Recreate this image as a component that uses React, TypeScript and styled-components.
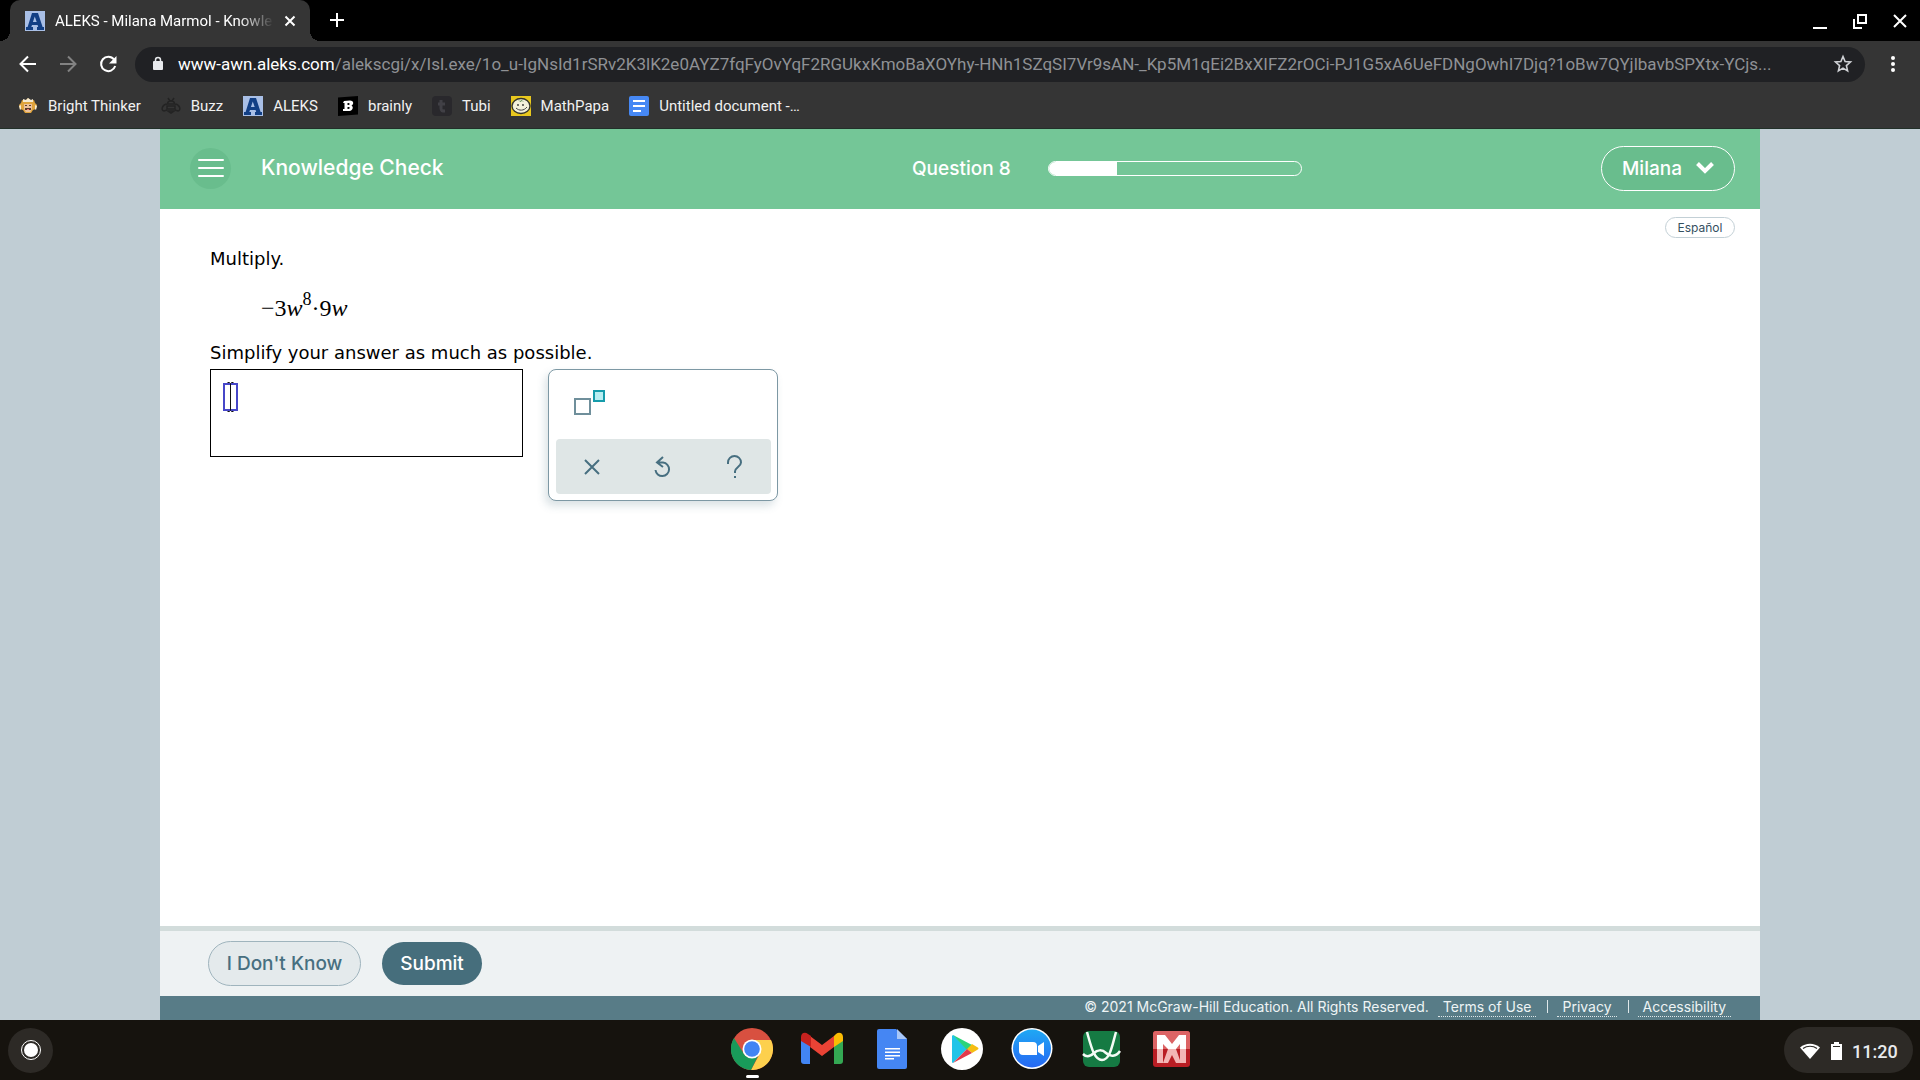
import React from "react";
import styled, { createGlobalStyle } from "styled-components";

const ui = `Roboto, "Liberation Sans", sans-serif`;
const brand = `Inter, "Open Sans", sans-serif`;
const body = `"DejaVu Sans", Verdana, sans-serif`;
const math = `"Liberation Serif", "Times New Roman", serif`;

const Global = createGlobalStyle`
  *, *::before, *::after { box-sizing: border-box; }
  body { margin: 0; background: #c0cdd4; }
  button, input, textarea { font: inherit; color: inherit; margin: 0; }
  button { cursor: pointer; border: 0; padding: 0; background: none; }
  svg { display: block; flex: none; }
`;

const Screen = styled.div`
  display: flex;
  flex-direction: column;
  min-height: 100vh;
  font-family: ${ui};
`;

/* Browser chrome */
const TabStrip = styled.header`
  display: flex;
  align-items: stretch;
  height: 41px;
  padding-left: 10px;
  background: #000;
  color: #fff;
`;
const Tab = styled.div`
  position: relative;
  display: flex;
  align-items: center;
  gap: 10px;
  width: 300px;
  padding: 0 14px 0 15px;
  border-radius: 10px 10px 0 0;
  background: #353535;
  font-size: 15px;
  &::before,
  &::after {
    content: "";
    position: absolute;
    bottom: 0;
    width: 10px;
    height: 10px;
  }
  &::before {
    left: -10px;
    background: radial-gradient(circle at 0 0, transparent 10px, #353535 10px);
  }
  &::after {
    right: -10px;
    background: radial-gradient(circle at 100% 0, transparent 10px, #353535 10px);
  }
`;
const TabTitle = styled.span`
  flex: 1;
  overflow: hidden;
  white-space: nowrap;
  line-height: 20px;
  mask-image: linear-gradient(to right, #000 84%, transparent);
`;
const IconButton = styled.button<{ $size?: number }>`
  display: flex;
  align-items: center;
  justify-content: center;
  flex: none;
  width: ${(p) => p.$size ?? 40}px;
  height: ${(p) => p.$size ?? 40}px;
`;
const TabClose = styled(IconButton)`
  width: 12px;
  height: 20px;
`;
const NewTab = styled(IconButton)`
  margin-left: 7px;
`;
const WindowControls = styled.div`
  display: flex;
  align-items: flex-end;
  margin-left: auto;
`;

const Toolbar = styled.nav`
  display: flex;
  align-items: center;
  height: 46px;
  padding: 0 7px 0 8px;
  background: #353535;
  color: #fff;
`;
const AddressBar = styled.label`
  display: flex;
  align-items: center;
  flex: 1;
  min-width: 0;
  height: 35px;
  margin: 0 8px 0 7px;
  padding: 0 2px 0 16px;
  border-radius: 18px;
  background: #202124;
  font-size: 17px;
  line-height: 24px;
`;
const Host = styled.span`
  margin-left: 13px;
`;
const PathInput = styled.input`
  flex: 1;
  min-width: 0;
  height: 24px;
  padding: 0;
  border: 0;
  outline: 0;
  background: none;
  color: #8f9195;
  text-overflow: ellipsis;
`;

const Bookmarks = styled.nav`
  display: flex;
  align-items: center;
  gap: 20px;
  height: 42px;
  padding: 0 18px 4px;
  border-bottom: 1px solid #223029;
  background: #353535;
`;
const Bookmark = styled.a`
  display: flex;
  align-items: center;
  gap: 10px;
  color: #f1f1f1;
  font-size: 15px;
  line-height: 20px;
  text-decoration: none;
  white-space: nowrap;
`;

/* Course page */
const Page = styled.div`
  display: flex;
  flex: 1;
  flex-direction: column;
  width: 100%;
  max-width: 1600px;
  margin: 0 auto;
  background: #fff;
`;
const CourseBar = styled.header`
  display: grid;
  grid-template-columns: 47% 1fr auto;
  align-items: center;
  height: 80px;
  padding-bottom: 2px;
  background: #74c697;
  color: #fff;
  font-family: ${brand};
`;
const CourseTitle = styled.div`
  display: flex;
  align-items: center;
  gap: 30px;
  padding-left: 30px;
`;
const MenuButton = styled(IconButton)`
  width: 41px;
  height: 41px;
  border-radius: 50%;
  background: #69bd8d;
`;
const Heading = styled.h1`
  margin: 0;
  font-size: 21px;
  font-weight: 500;
  line-height: 28px;
`;
const Progress = styled.div`
  display: flex;
  align-items: center;
  gap: 37px;
  font-size: 19px;
  font-weight: 500;
`;
const Track = styled.div`
  width: 254px;
  height: 15px;
  overflow: hidden;
  border: 1px solid #fff;
  border-radius: 8px;
`;
const Fill = styled.div`
  height: 100%;
  background: #fff;
`;
const UserButton = styled.button`
  display: flex;
  align-items: center;
  justify-content: space-between;
  width: 134px;
  height: 45px;
  margin-right: 25px;
  padding: 0 20px;
  border: 1px solid #fff;
  border-radius: 23px;
  background: #69bd8d;
  font-size: 19px;
  font-weight: 500;
`;
const Language = styled.div`
  display: flex;
  justify-content: flex-end;
  padding: 8px 25px 0;
`;
const LanguageButton = styled.button`
  width: 70px;
  height: 21px;
  border: 1px solid #c3d0d6;
  border-radius: 11px;
  color: #35505f;
  font-family: ${brand};
  font-size: 12px;
  line-height: 19px;
`;
const Question = styled.main`
  flex: 1;
  padding: 9px 50px;
  color: #000;
  font-family: ${body};
  font-size: 18px;
  line-height: 24px;
`;
const Prompt = styled.p`
  margin: 0;
`;
const Expression = styled.div`
  margin: 23px 0 19px 51px;
  font-family: ${math};
  font-size: 24px;
  line-height: 28px;
  sup {
    font-size: 18px;
    line-height: 0;
    vertical-align: 11px;
  }
`;
const Workspace = styled.div`
  display: flex;
  align-items: flex-start;
  gap: 25px;
  margin-top: 4px;
`;
const AnswerBox = styled.label`
  position: relative;
  display: block;
`;
const AnswerInput = styled.textarea`
  display: block;
  width: 313px;
  height: 88px;
  padding: 12px;
  border: 1px solid #000;
  border-radius: 0;
  outline: 0;
  resize: none;
  background: #fff;
`;
const Caret = styled.svg`
  position: absolute;
  left: 13px;
  top: 12px;
`;
const Palette = styled.div`
  display: flex;
  flex-direction: column;
  justify-content: space-between;
  width: 230px;
  height: 132px;
  padding: 13px 6px 6px 7px;
  border: 1px solid #7d98a4;
  border-radius: 8px;
  background: #fff;
  box-shadow: -3px 5px 8px rgba(70, 110, 125, 0.2);
`;
const ExponentButton = styled(IconButton)`
  margin-left: 14px;
`;
const PaletteActions = styled.div`
  display: grid;
  grid-template-columns: repeat(3, 1fr);
  height: 55px;
  border-radius: 4px;
  background: #dfe6e6;
  color: #476f80;
`;
const PaletteButton = styled(IconButton)`
  width: 100%;
  height: 100%;
`;

const ActionBar = styled.div`
  display: flex;
  align-items: center;
  gap: 21px;
  height: 70px;
  padding: 0 48px;
  border-top: 5px solid #d2dcdb;
  background: #eef2f3;
`;
const Pill = styled.button<{ $primary?: boolean }>`
  height: ${(p) => (p.$primary ? 43 : 45)}px;
  width: ${(p) => (p.$primary ? 100 : 153)}px;
  border: ${(p) => (p.$primary ? "0" : "1px solid #9fb4bd")};
  border-radius: 23px;
  background: ${(p) => (p.$primary ? "#466e7c" : "#e4eaec")};
  color: ${(p) => (p.$primary ? "#fff" : "#476f80")};
  font-family: ${brand};
  font-size: 19px;
  font-weight: 500;
`;
const Legal = styled.footer`
  display: flex;
  align-items: center;
  justify-content: flex-end;
  height: 24px;
  padding: 0 29px 2px 20px;
  background: #587c87;
  color: #eef4f5;
  font-family: ${brand};
  font-size: 14px;
  line-height: 18px;
  white-space: nowrap;
`;
const LegalLink = styled.a`
  margin: 0 0 0 9px;
  padding: 0 5px;
  border-bottom: 1px dotted #dfe8ea;
  color: inherit;
  text-decoration: none;
`;
const Divider = styled.span`
  width: 1px;
  height: 13px;
  margin: 0 0 2px 11px;
  background: #dfe8ea;
`;

/* Shelf */
const Shelf = styled.footer`
  display: grid;
  grid-template-columns: 1fr auto 1fr;
  align-items: center;
  height: 60px;
  padding: 0 7px 0 8px;
  background: #16130e;
  color: #e8eaed;
`;
const Launcher = styled(IconButton)`
  width: 45px;
  height: 45px;
  border-radius: 50%;
  background: #2d2a26;
`;
const Apps = styled.div`
  display: flex;
  gap: 28px;
  height: 60px;
  padding-left: 3px;
`;
const AppButton = styled.button<{ $active?: boolean }>`
  display: flex;
  flex-direction: column;
  align-items: center;
  gap: 5px;
  width: 42px;
  padding-top: 8px;
  &::after {
    content: "";
    width: 13px;
    height: 3px;
    border-radius: 2px;
    background: ${(p) => (p.$active ? "#fff" : "transparent")};
  }
`;
const Tray = styled.button`
  display: flex;
  align-items: center;
  justify-self: end;
  gap: 10px;
  width: 129px;
  height: 46px;
  padding: 2px 15px 0;
  border-radius: 23px;
  background: #2d2a26;
  font-size: 18px;
  font-weight: 500;
`;

const Line = ({ size = 20, width = 2, children, box = 20 }: { size?: number; width?: number; box?: number; children: React.ReactNode }) => (
  <svg width={size} height={size} viewBox={`0 0 ${box} ${box}`} fill="none" stroke="currentColor" strokeWidth={width}>
    {children}
  </svg>
);

const AleksIcon = () => (
  <svg width="20" height="20" viewBox="0 0 20 20">
    <path fill="#a9bfe6" d="M0 0h20v20H0z" />
    <path fill="#123f85" fillRule="evenodd" d="M7 2h6l4.600 14H19v3h-7v-3h1.200l-.6-2H7l-.7 2H8v3H1v-3h1.600zM9.800 5.500 7.900 11h3.800z" />
  </svg>
);
const ThinkerIcon = () => (
  <svg width="20" height="20" viewBox="0 0 20 20">
    <path fill="#e0a43c" d="M1 9l2-2 1-3 3 1 3-3 3 3 3-1 1 3 2 2-1 4-3 1-2 3H7l-2-3-3-1z" />
    <path fill="#f5ead1" d="M5 3l3 1 2-2 3 2 2-1 0 3H5zM1 10l2-1v4l-1 1zM19 10l-2-1v4l1 1z" />
    <path fill="#ecc29c" d="M6 8h8v5l-2 3H8l-2-3z" />
    <path fill="#5c3b28" d="M7 9h2v1H7zM11 9h2v1h-2zM7 12h6v2H7z" />
    <path fill="#e77" d="M9 13h2v1H9z" />
  </svg>
);
const BuzzIcon = () => (
  <svg width="20" height="20" viewBox="0 0 20 20" fill="none" stroke="#232323" strokeWidth="1.500">
    <path d="M7 2l2 3M13 2l-2 3M6.500 8C6.500 4 13.500 4 13.500 8zM6 8C2 8-1 14 3 15l3-1M14 8c4 0 7 6 3 7l-3-1M6 10h8v3H6zM7 15h6l-3 2z" />
  </svg>
);
const BrainlyIcon = () => (
  <svg width="20" height="20" viewBox="0 0 20 20">
    <path fill="#000" d="M0 1.500 20 0v18.500L0 20z" />
    <path fill="#fff" fillRule="evenodd" d="M6 5l6-.5c4 0 4 4 1.500 5 2.500 1.500 1 5-2 5.500L5 15v-2h1.500V7H5zM9.500 7v2c3 0 3-2 0-2zm0 4v2c3 0 3-2.500 0-2z" />
  </svg>
);
const TubiIcon = () => (
  <svg width="20" height="20" viewBox="0 0 20 20">
    <rect width="20" height="20" rx="4" fill="#29282c" />
    <path d="M9 4v8c0 3 1 3 4 3M6 8h7" fill="none" stroke="#414046" strokeWidth="3" />
  </svg>
);
const PapaIcon = () => (
  <svg width="20" height="20" viewBox="0 0 20 20">
    <path fill="#e9c81e" d="M0 0h20v20H0z" />
    <ellipse cx="10" cy="10" rx="9" ry="7.500" fill="#f4f1dc" stroke="#35352b" strokeWidth="1.400" />
    <path d="M5 12c3 3 8 3 11-1" fill="none" stroke="#444" />
    <path d="M8 4.500l1 1 2-1 1 1" fill="none" stroke="#5a8a50" />
    <circle cx="7" cy="9" r="0.900" fill="#333" />
    <circle cx="12" cy="9" r="0.900" fill="#333" />
  </svg>
);
const DocMarkIcon = () => (
  <svg width="20" height="20" viewBox="0 0 20 20">
    <rect width="20" height="20" rx="2" fill="#4688f4" />
    <path fill="#fff" d="M4 4h12v2H4zM4 9h12v2H4zM4 14h8v2H4z" />
  </svg>
);

const ChromeIcon = () => (
  <svg width="42" height="42" viewBox="0 0 42 42">
    <circle cx="21" cy="21" r="21" fill="#d85040" />
    <path d="M21 12h19A21 21 0 0 1 20 42l9-16.500z" fill="#fdd04d" />
    <path d="M3 10l10 16c3 5 10 5 14 2l-7 14A21 21 0 0 1 3 10z" fill="#199b5a" />
    <circle cx="21" cy="21" r="9.500" fill="#fff" />
    <circle cx="21" cy="21" r="7.800" fill="#4284f4" />
  </svg>
);
const GmailIcon = () => (
  <svg width="42" height="42" viewBox="0 0 42 42">
    <path fill="#4285f4" d="M0 12l9 5v19H3a3 3 0 0 1-3-3z" />
    <path fill="#34a853" d="M42 12l-9 5v19h6a3 3 0 0 0 3-3z" />
    <path fill="#ea4335" d="M9 8l12 9 12-9v11L21 28 9 19z" />
    <path fill="#c5221f" d="M0 12V9c0-4 4-5.500 7-3l3 2v11L0 13z" />
    <path fill="#fbbc04" d="M42 12V9c0-4-4-5.500-7-3l-2 2v11l9-6z" />
  </svg>
);
const DocsIcon = () => (
  <svg width="42" height="42" viewBox="0 0 42 42">
    <path fill="#4586f3" d="M8 1h17l11 10v28a2 2 0 0 1-2 2H8a2 2 0 0 1-2-2V3a2 2 0 0 1 2-2z" />
    <path fill="#a8c7f8" d="M26 1l10 10H26z" />
    <path fill="#fff" d="M14 20h15v1.500H14zM14 23.500h15V25H14zM14 27h15v1.500H14zM14 30h9v1.500h-9z" />
  </svg>
);
const PlayIcon = () => (
  <svg width="42" height="42" viewBox="0 0 42 42">
    <circle cx="21" cy="21" r="21" fill="#fff" />
    <path fill="#20c4e8" d="M11 8c0-1 1-1 2-.5L26 21 12 35c-1 0-1-1-1-2z" />
    <path fill="#2bd47a" d="M12 7l19 10-5 5z" />
    <path fill="#f5bd12" d="M31 16l5 3c2 1 2 2 0 3l-5 3-5-4z" />
    <path fill="#e3394b" d="M26 21l5 4-19 10z" />
  </svg>
);
const ZoomIcon = () => (
  <svg width="42" height="42" viewBox="0 0 42 42">
    <defs>
      <linearGradient id="zoomFace" x1="0" y1="0" x2="0" y2="1">
        <stop offset="0" stopColor="#1fa8f4" />
        <stop offset="1" stopColor="#2668f3" />
      </linearGradient>
    </defs>
    <circle cx="21" cy="20.500" r="20.500" fill="#fff" />
    <circle cx="21" cy="20.500" r="19" fill="url(#zoomFace)" />
    <path fill="#fff" d="M8 14h14a4 4 0 0 1 4 4v9H12a4 4 0 0 1-4-4zM27 18l6-4v14l-6-4z" />
  </svg>
);
const DesmosIcon = () => (
  <svg width="42" height="42" viewBox="0 0 42 42">
    <rect x="2" y="3" width="37" height="36" rx="6" fill="#157a43" />
    <g fill="none" stroke="#f4fbf5" strokeWidth="2.500">
      <path d="M6 4c4 14 7 28 15 28S31 18 35 4" />
      <path d="M2 26c4 4 8 2 11-1s8-4 12 0 10 4 14-2" />
    </g>
  </svg>
);
const MathIcon = () => (
  <svg width="42" height="42" viewBox="0 0 42 42">
    <rect x="2" y="3" width="37" height="36" rx="3" fill="#b91e24" />
    <path fill="#dc6465" d="M5 3h31a3 3 0 0 1 3 3v15H2V6a3 3 0 0 1 3-3z" />
    <path fill="#fff" d="M6 7h8l7 9 7-9h7v14h-6v-5l-4 5h-8l-5-5v5H6z" />
    <path fill="#f3b6b5" d="M6 21h6v14H6zM29 21h6v14h-6zM17 21h8l5 14h-5l-4-8-4 8h-5z" />
  </svg>
);

const bookmarks = [
  { name: "Bright Thinker", Icon: ThinkerIcon },
  { name: "Buzz", Icon: BuzzIcon },
  { name: "ALEKS", Icon: AleksIcon },
  { name: "brainly", Icon: BrainlyIcon },
  { name: "Tubi", Icon: TubiIcon },
  { name: "MathPapa", Icon: PapaIcon },
  { name: "Untitled document -…", Icon: DocMarkIcon },
];
const apps = [
  { name: "Chrome", Icon: ChromeIcon, active: true },
  { name: "Gmail", Icon: GmailIcon },
  { name: "Docs", Icon: DocsIcon },
  { name: "Play Store", Icon: PlayIcon },
  { name: "Zoom", Icon: ZoomIcon },
  { name: "Desmos", Icon: DesmosIcon },
  { name: "Mathway", Icon: MathIcon },
];
const path =
  "/alekscgi/x/Isl.exe/1o_u-IgNsId1rSRv2K3lK2e0AYZ7fqFyOvYqF2RGUkxKmoBaXOYhy-HNh1SZqSI7Vr9sAN-_Kp5M1qEi2BxXIFZ2rOCi-PJ1G5xA6UeFDNgOwhI7Djq?1oBw7QYjlbavbSPXtx-YCjs...";

export default function App() {
  const progress = 27;
  return (
    <Screen>
      <Global />
      <TabStrip>
        <Tab>
          <AleksIcon />
          <TabTitle>ALEKS - Milana Marmol - Knowle</TabTitle>
          <TabClose aria-label="Close tab">
            <Line size={12} box={12}><path d="M1.500 1.500l9 9M10.500 1.500l-9 9" /></Line>
          </TabClose>
        </Tab>
        <NewTab aria-label="New tab">
          <Line size={16} box={16}><path d="M8 1v14M1 8h14" /></Line>
        </NewTab>
        <WindowControls>
          <IconButton aria-label="Minimize"><Line><path d="M3 17h14" /></Line></IconButton>
          <IconButton aria-label="Restore"><Line><path d="M8 4h8v8H8zM4 8v9h8" /></Line></IconButton>
          <IconButton aria-label="Close window"><Line><path d="M4 4l12 12M16 4L4 16" /></Line></IconButton>
        </WindowControls>
      </TabStrip>

      <Toolbar aria-label="Navigation">
        <IconButton aria-label="Back"><Line><path d="M18 10H3M10 2.500L2.500 10l7.500 7.500" /></Line></IconButton>
        <IconButton aria-label="Forward" disabled>
          <svg width="20" height="20" fill="none" stroke="#828282" strokeWidth="2"><path d="M2 10h15M10 2.500l7.500 7.500-7.500 7.500" /></svg>
        </IconButton>
        <IconButton aria-label="Reload">
          <svg width="20" height="20" fill="none" stroke="currentColor" strokeWidth="2">
            <path d="M16 5.500A7.200 7.200 0 1 0 17.200 12" />
            <path d="M18.500 2v7.500H11z" fill="currentColor" stroke="none" />
          </svg>
        </IconButton>
        <AddressBar>
          <svg width="14" height="18" viewBox="0 0 14 18">
            <rect x="2" y="6" width="10" height="9" rx="1" fill="#e8eaed" />
            <path d="M4.500 7V5a2.500 2.500 0 0 1 5 0v2" fill="none" stroke="#e8eaed" strokeWidth="1.500" />
          </svg>
          <Host>www-awn.aleks.com</Host>
          <PathInput aria-label="Address" defaultValue={path} />
          <IconButton aria-label="Bookmark this page">
            <svg width="20" height="20" fill="none" stroke="#d0d2d6" strokeWidth="1.600">
              <path d="M10 2.500l2.100 5 5.400.5-4.100 3.600 1.200 5.300L10 14.100l-4.600 2.800 1.200-5.300L2.500 8l5.400-.5z" />
            </svg>
          </IconButton>
        </AddressBar>
        <IconButton aria-label="Menu">
          <svg width="20" height="20" fill="currentColor">
            <circle cx="10" cy="4" r="2" /><circle cx="10" cy="10" r="2" /><circle cx="10" cy="16" r="2" />
          </svg>
        </IconButton>
      </Toolbar>

      <Bookmarks aria-label="Bookmarks">
        {bookmarks.map(({ name, Icon }) => (
          <Bookmark key={name} href="#"><Icon />{name}</Bookmark>
        ))}
      </Bookmarks>

      <Page>
        <CourseBar>
          <CourseTitle>
            <MenuButton aria-label="Open menu">
              <svg width="26" height="20" stroke="#fff" strokeWidth="2" strokeLinecap="round"><path d="M1 2h24M1 10h24M1 18h24" /></svg>
            </MenuButton>
            <Heading>Knowledge Check</Heading>
          </CourseTitle>
          <Progress>
            <span>Question 8</span>
            <Track role="progressbar" aria-label="Progress" aria-valuenow={progress}>
              <Fill style={{ width: `${progress}%` }} />
            </Track>
          </Progress>
          <UserButton>
            Milana
            <svg width="18" height="14" fill="none" stroke="#fff" strokeWidth="4"><path d="M1.500 2.500L9 10l7.500-7.500" /></svg>
          </UserButton>
        </CourseBar>
        <Language><LanguageButton>Español</LanguageButton></Language>

        <Question>
          <Prompt>Multiply.</Prompt>
          <Expression>−3<i>w</i><sup>8</sup>·9<i>w</i></Expression>
          <Prompt>Simplify your answer as much as possible.</Prompt>
          <Workspace>
            <AnswerBox>
              <AnswerInput aria-label="Your answer" />
              <Caret width="16" height="33" viewBox="0 0 16 33" fill="none">
                <path d="M1 3h13v26H1z" stroke="#4646c8" strokeWidth="2" />
                <path d="M7.500 3v26M4.500 1.500h2l1 1 1-1h2M4.500 30.500h2l1-1 1 1h2" stroke="#111" />
              </Caret>
            </AnswerBox>
            <Palette>
              <ExponentButton aria-label="Exponent">
                <svg width="40" height="40" viewBox="0 0 40 40">
                  <path d="M5 16h15v15H5z" fill="#fff" stroke="#6f8f9b" strokeWidth="2" />
                  <path d="M24 8h10v10H24z" fill="#b9eef2" stroke="#169cab" strokeWidth="2" />
                </svg>
              </ExponentButton>
              <PaletteActions>
                <PaletteButton aria-label="Clear"><Line size={16} box={16}><path d="M1 1l14 14M15 1L1 15" /></Line></PaletteButton>
                <PaletteButton aria-label="Undo">
                  <svg width="18" height="22" fill="none" stroke="currentColor" strokeWidth="2">
                    <path d="M9 1L3 6.500l6 4.500M3 6.500h6a6.800 6.800 0 1 1-7.500 7.500" />
                  </svg>
                </PaletteButton>
                <PaletteButton aria-label="Help">
                  <svg width="18" height="24" fill="none" stroke="currentColor" strokeWidth="2">
                    <path d="M2 9V7.500a6.500 6.500 0 0 1 13 0c0 4-6 5-6 9V18M9 21v2" />
                  </svg>
                </PaletteButton>
              </PaletteActions>
            </Palette>
          </Workspace>
        </Question>

        <ActionBar>
          <Pill>I Don't Know</Pill>
          <Pill $primary>Submit</Pill>
        </ActionBar>
        <Legal>
          <span>© 2021 McGraw-Hill Education. All Rights Reserved.</span>
          <LegalLink href="#">Terms of Use</LegalLink>
          <Divider />
          <LegalLink href="#">Privacy</LegalLink>
          <Divider />
          <LegalLink href="#">Accessibility</LegalLink>
        </Legal>
      </Page>

      <Shelf>
        <Launcher aria-label="Launcher">
          <svg width="22" height="22"><circle cx="11" cy="11" r="7" fill="#fff" /><circle cx="11" cy="11" r="9.500" fill="none" stroke="#fff" /></svg>
        </Launcher>
        <Apps>
          {apps.map(({ name, Icon, active }) => (
            <AppButton key={name} aria-label={name} $active={active}><Icon /></AppButton>
          ))}
        </Apps>
        <Tray>
          <svg width="22" height="20" viewBox="0 0 22 20">
            <path fill="#fff" d="M1 6.500C7 1.500 15 1.500 21 6.500L11 18z" />
            <path d="M4 7.500c4-3 10-3 14 0" fill="none" stroke="#2d2a26" strokeWidth="1.200" />
          </svg>
          <svg width="11" height="18" viewBox="0 0 11 18">
            <path fill="#fff" d="M3 0h5v2h3v16H0V2h3z" />
            <path d="M2 4.500h7" stroke="#2d2a26" />
          </svg>
          11:20
        </Tray>
      </Shelf>
    </Screen>
  );
}
